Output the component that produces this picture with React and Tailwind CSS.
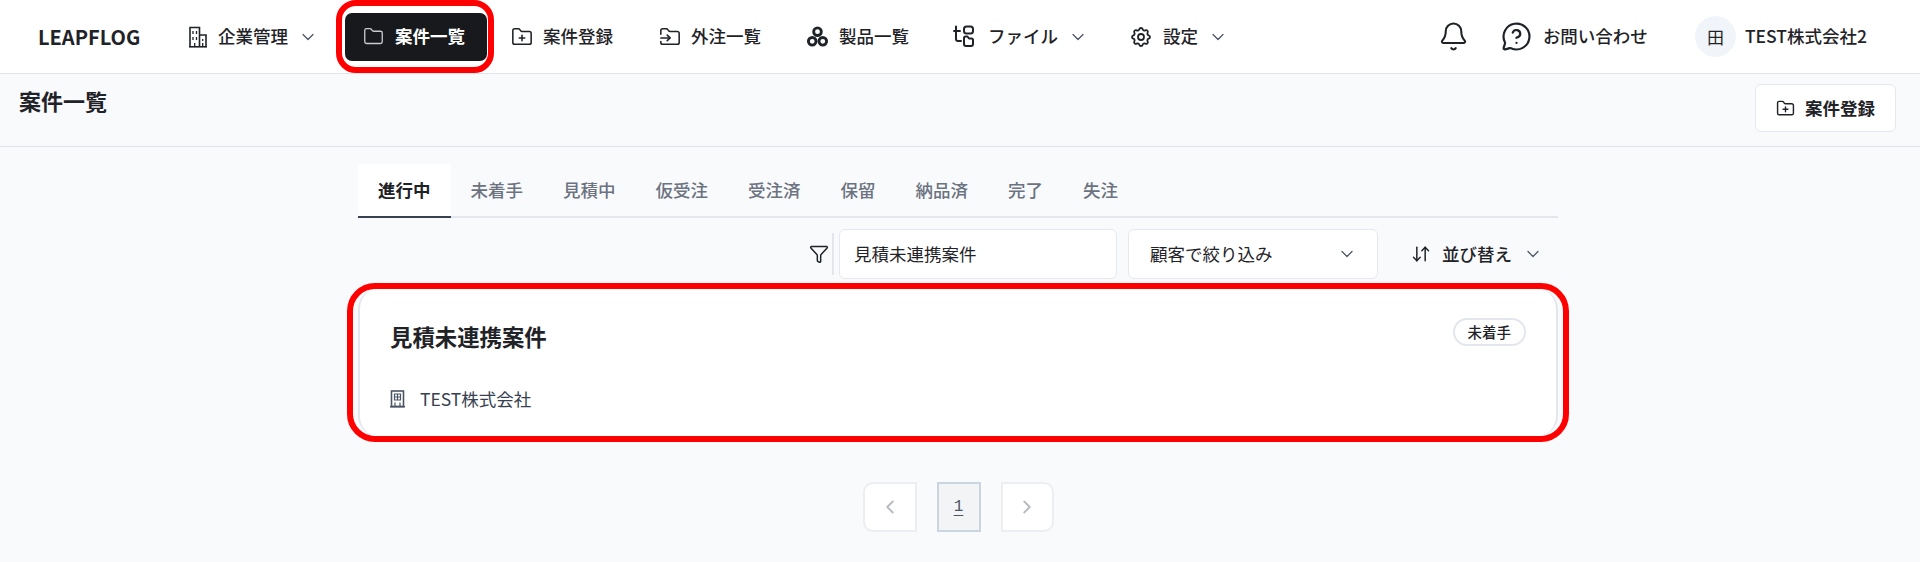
import { Bell, ChevronDown, ChevronLeft, ChevronRight, Folder, FolderInput, FolderPlus, Funnel, MessageCircleQuestion, ArrowDownUp } from "lucide-react";
import { TbCircles, TbSettings } from "react-icons/tb";

const jp = "font-['Noto_Sans_CJK_JP','Noto_Sans',sans-serif]";

function BuildingsIcon() {
    return (
        <svg width="20" height="22" viewBox="0 0 20 22" fill="none" stroke="currentColor" strokeWidth="1.6">
            <path d="M2 21V1.5h9.5V21" />
            <path d="M11.5 9H18v12" />
            <path d="M1 20.8h18" />
            <path d="M5 5v3M8.5 5v3M5 11v3M8.5 11v3M6.7 17v4M14.7 13v2M14.7 17v4" strokeWidth="1.3" />
        </svg>
    );
}

function OfficeIcon() {
    return (
        <svg width="15" height="18" viewBox="0 0 15 18" fill="none" stroke="#4b5563" strokeWidth="1.6">
            <rect x="1.5" y="1" width="12" height="15.5" />
            <path d="M0 16.7h15" />
            <path d="M4.5 4h6v6h-6zM7.5 4v6M4.5 7h6M5 12.5v4M10 12.5v4" strokeWidth="1.2" />
        </svg>
    );
}

function FilesIcon() {
    return (
        <svg className="mr-[3px]" width="22" height="23" viewBox="0 0 22 23" fill="none" stroke="currentColor" strokeWidth="2" strokeLinecap="round" strokeLinejoin="round">
            <path d="M3 1.5V14a2 2 0 0 0 2 2h3" />
            <path d="M1 6h6" />
            <rect x="11" y="1.5" width="9" height="7" rx="2.5" />
            <path d="M11 13a1.5 1.5 0 0 1 1.5-1.5h2l1.5 2h2.5a1.5 1.5 0 0 1 1.5 1.5v4a2 2 0 0 1-2 2h-5a2 2 0 0 1-2-2z" />
        </svg>
    );
}

function NavItem({ icon, label, arrow }) {
    return (
        <div className="flex items-center px-5 text-[17.5px] font-medium text-[#1f2328]">
            {icon}
            <span className="ml-[10px]">{label}</span>
            {arrow && <ChevronDown size={20} strokeWidth={1.5} className="ml-[10px] text-[#4b5563]" />}
        </div>
    );
}

const tabs = ["未着手", "見積中", "仮受注", "受注済", "保留", "納品済", "完了", "失注"];

export default function App() {
    return (
        <div className={`${jp} min-h-[562px] bg-[#f9fafc] text-[#1f2328]`}>
            <header className="flex h-[74px] items-center border-b border-[#dfe3ea] bg-white">
                <div className="ml-[38px] w-[130px] text-[20px] font-bold">LEAPFLOG</div>
                <NavItem icon={<BuildingsIcon />} label="企業管理" arrow />
                <div className="-ml-[2px] box-border flex h-[73px] w-[158px] items-center rounded-[20px] border-[6px] border-[#ff0000] pl-[3px]">
                    <div className="flex h-[48px] w-[142px] items-center rounded-[7px] bg-[#17191c] pl-[18px] text-[17.5px] font-bold text-white">
                        <Folder size={21} strokeWidth={1.5} className="text-[#c9ccd1]" />
                        <span className="ml-[11px]">案件一覧</span>
                    </div>
                </div>
                <div className="-ml-[3px] flex">
                    <NavItem icon={<FolderPlus size={22} strokeWidth={1.7} />} label="案件登録" />
                    <div className="w-[6px]" />
                    <NavItem icon={<FolderInput size={22} strokeWidth={1.7} />} label="外注一覧" />
                    <div className="w-[5px]" />
                    <NavItem icon={<TbCircles size={23} strokeWidth={3} />} label="製品一覧" />
                    <div className="w-[4px]" />
                    <NavItem icon={<FilesIcon />} label="ファイル" arrow />
                    <div className="w-[1px]" />
                    <NavItem icon={<TbSettings size={24} strokeWidth={1.8} />} label="設定" arrow />
                </div>
                <div className="ml-auto flex items-center pr-[53px]">
                    <Bell size={31} strokeWidth={1.6} />
                    <MessageCircleQuestion size={31} strokeWidth={1.7} className="ml-[32px]" />
                    <span className="ml-[11px] text-[17.5px] font-medium">お問い合わせ</span>
                    <div className="ml-[47px] flex h-[41px] w-[41px] items-center justify-center rounded-full bg-[#f1f5f9] text-[17px]">田</div>
                    <span className="ml-[9px] text-[17.5px] font-medium">TEST株式会社2</span>
                </div>
            </header>

            <div className="flex h-[73px] items-start justify-between border-b border-[#dfe3ea] pl-[19px] pr-[24px] pt-[10px]">
                <h1 className="text-[22px] font-bold leading-[32px]">案件一覧</h1>
                <button className="flex h-[48px] w-[141px] items-center justify-center rounded-[6px] border border-[#e5e8ee] bg-white text-[17.5px] font-bold">
                    <FolderPlus size={19} strokeWidth={1.8} />
                    <span className="ml-[10px]">案件登録</span>
                </button>
            </div>

            <main className="ml-[358px] w-[1200px] pt-[17px]">
                <div className="flex h-[54px] border-b-2 border-[#e3e6ec]">
                    <div className="-mb-[2px] flex h-[54px] items-center border-b-2 border-[#374151] bg-white px-5 text-[17.5px] font-bold">進行中</div>
                    {tabs.map((t) => (
                        <div key={t} className="flex items-center px-5 text-[17.5px] font-medium text-[#6b7280]">{t}</div>
                    ))}
                </div>

                <div className="mt-[11px] flex h-[50px] items-center">
                    <Funnel size={20} strokeWidth={1.8} className="ml-[451px]" />
                    <div className="ml-[3px] h-[42px] w-[2px] bg-[#e3e6ec]" />
                    <div className="ml-[5px] flex h-[50px] w-[278px] items-center rounded-[6px] border border-[#e5e8ee] bg-white pl-[14px] text-[17.5px]">見積未連携案件</div>
                    <div className="ml-[11px] flex h-[50px] w-[250px] items-center justify-between rounded-[6px] border border-[#e5e8ee] bg-white pl-[21px] pr-[20px] text-[17.5px]">
                        顧客で絞り込み
                        <ChevronDown size={20} strokeWidth={1.5} className="text-[#4b5563]" />
                    </div>
                    <ArrowDownUp size={20} strokeWidth={1.8} className="ml-[33px]" />
                    <span className="ml-[11px] text-[17.5px] font-medium">並び替え</span>
                    <ChevronDown size={20} strokeWidth={1.5} className="ml-[11px] text-[#4b5563]" />
                </div>

                <div className="-mx-[11px] mt-[4px] box-border h-[159px] rounded-[28px] border-[6px] border-[#ff0000] px-[5px]">
                    <div className="flex h-[147px] flex-col rounded-[20px] border-x-2 border-[#e3e6ec] bg-white pl-[30px] pr-[30px]">
                        <div className="mt-[29px] flex items-center justify-between">
                            <div className="text-[22.4px] font-bold leading-[36px]">見積未連携案件</div>
                            <div className="-mt-[8px] rounded-full border-2 border-[#e3e6ec] px-[13px] py-[1px] text-[14.5px] font-medium leading-[22px]">未着手</div>
                        </div>
                        <div className="mt-[32px] flex items-center text-[17.5px] text-[#374151]">
                            <OfficeIcon />
                            <span className="ml-[15px]">TEST株式会社</span>
                        </div>
                    </div>
                </div>

                <div className="mt-[40px] flex items-center justify-center">
                    <div className="flex h-[50px] w-[54px] items-center justify-center rounded-l-[10px] border-2 border-[#eceef2] bg-white text-[#b6bac1]">
                        <ChevronLeft size={22} strokeWidth={2} />
                    </div>
                    <div className="ml-[20px] flex h-[50px] w-[44px] items-center justify-center border-2 border-[#cbd5e1] bg-[#f3f4f6] font-['Liberation_Mono',monospace] text-[16px] text-[#4b5563] underline underline-offset-4">1</div>
                    <div className="ml-[20px] flex h-[50px] w-[53px] items-center justify-center rounded-r-[10px] border-2 border-[#eceef2] bg-white text-[#b6bac1]">
                        <ChevronRight size={22} strokeWidth={2} />
                    </div>
                </div>
            </main>
        </div>
    );
}
